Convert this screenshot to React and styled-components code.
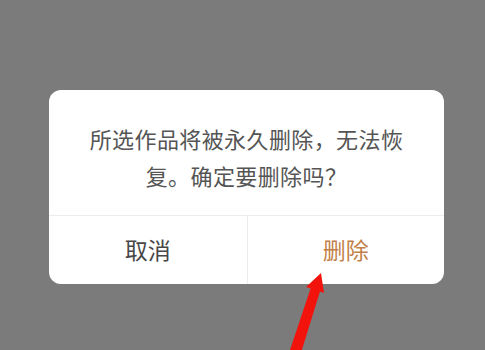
import styled, { createGlobalStyle } from 'styled-components';

const GlobalStyle = createGlobalStyle`
  html, body {
    margin: 0;
    padding: 0;
    background: #7b7b7b;
  }
  body {
    font-family: "Noto Sans CJK SC", "Noto Sans", sans-serif;
  }
`;

const Screen = styled.div`
  position: relative;
  width: 485px;
  height: 350px;
  overflow: hidden;
  box-sizing: border-box;
  padding: 90px 41px 0 49px;
  background: #7b7b7b;
`;

const Dialog = styled.div`
  width: 395px;
  background: #fff;
  border-radius: 12px;
  overflow: hidden;
`;

const Message = styled.p`
  margin: 0;
  padding: 30px 38px 21px;
  text-align: center;
  font-size: 22px;
  letter-spacing: 0.4px;
  line-height: 37px;
  color: #555;
`;

const Actions = styled.div`
  display: grid;
  grid-template-columns: 1fr 1fr;
  height: 68px;
  border-top: 1px solid #ececec;
`;

const ActionButton = styled.button`
  border: none;
  background: transparent;
  padding: 0 0 2px;
  font-family: inherit;
  font-size: 23px;
  color: ${props => (props.danger ? '#c27f47' : '#474747')};
  cursor: pointer;

  & + & {
    border-left: 1px solid #ececec;
  }
`;

const Arrow = styled.svg`
  position: absolute;
  left: 0;
  top: 0;
  pointer-events: none;
`;

export default function App() {
  return (
    <>
      <GlobalStyle />
      <Screen>
        <Dialog>
          <Message>所选作品将被永久删除，无法恢复。确定要删除吗？</Message>
          <Actions>
            <ActionButton>取消</ActionButton>
            <ActionButton danger>删除</ActionButton>
          </Actions>
        </Dialog>
        <Arrow width="485" height="350" viewBox="0 0 485 350">
          <polygon
            points="321,273 324,293 320,291.6 300,356 289,353 310.6,288.4 306,287"
            fill="#f2140c"
          />
        </Arrow>
      </Screen>
    </>
  );
}
